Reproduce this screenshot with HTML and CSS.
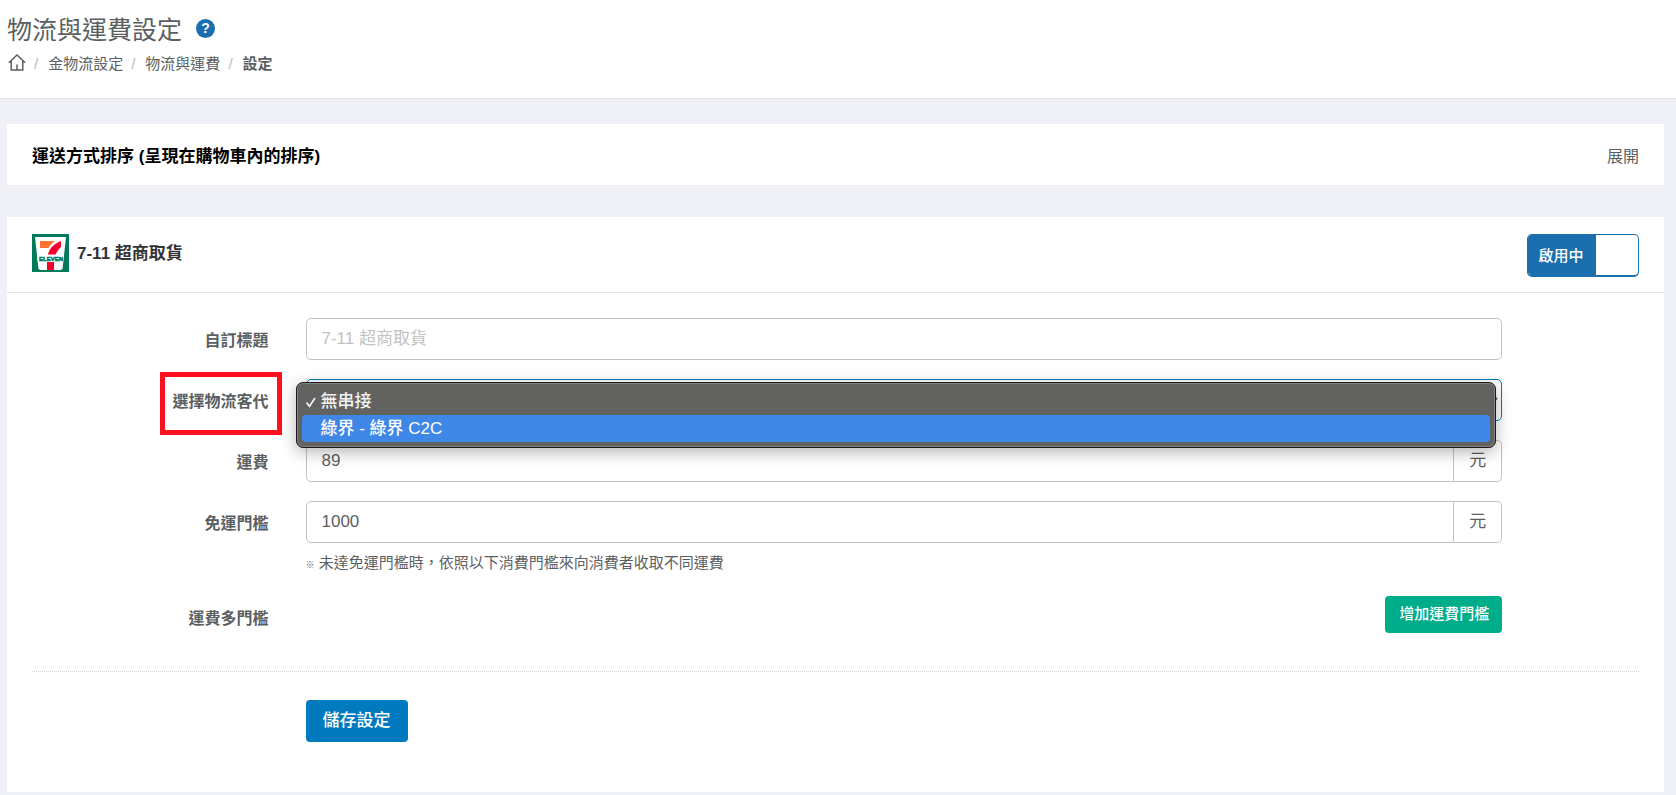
FILE: index.html
```html
<!DOCTYPE html>
<html lang="zh-Hant">
<head>
<meta charset="utf-8">
<title>物流與運費設定</title>
<link rel="stylesheet" href="styles.css">
</head>
<body>
<header class="page-header">
  <div class="title-row">
    <h1 class="page-title">物流與運費設定</h1>
    <a class="help" href="#" aria-label="說明">?</a>
  </div>
  <nav class="breadcrumb">
    <a class="crumb" href="#" aria-label="首頁">
      <svg class="home" viewBox="0 0 18 17" aria-hidden="true"><path d="M.8 8.700 9 1l8.200 7.700M3.200 7v8.900h11.600V7M9 10.500V16"/></svg>
    </a>
    <a class="crumb" href="#">金物流設定</a>
    <a class="crumb" href="#">物流與運費</a>
    <strong class="crumb">設定</strong>
  </nav>
</header>
<main class="content">
  <section class="card sort-card">
    <h2 class="sort-title">運送方式排序 (呈現在購物車內的排序)</h2>
    <a class="expand" href="#">展開</a>
  </section>
  <section class="card">
    <div class="card-header">
      <svg class="logo" viewBox="0 0 37 38" aria-hidden="true">
        <path fill="#007a5a" d="M0 0h37v38H0z"/>
        <path fill="#fff" d="M3 3h31l-3.500 32-2 1h-20l-2-1z"/>
        <path fill="#ff7330" d="M8 7h15c-3 2-5 4-6.500 7H8z"/>
        <path fill="#f4002e" d="M29 7v6c-4 4-6.500 8-7 14v9h-7v-8c0-10 4-17 14-21z"/>
        <path fill="#fff" d="M5 20.500h27L31.200 28H5.800z"/>
        <text class="logo-text" x="7" y="26.500">ELEVEN</text>
      </svg>
      <h2 class="card-title">7-11 超商取貨</h2>
      <label class="switch">
        <input class="switch-input" type="checkbox" checked>
        <span class="switch-on">啟用中</span>
        <span class="switch-handle"></span>
      </label>
    </div>
    <form class="form">
      <div class="row">
        <label class="label" for="custom-title">自訂標題</label>
        <div class="field"><input class="control" id="custom-title" type="text" placeholder="7-11 超商取貨"></div>
      </div>
      <div class="row">
        <label class="label" for="provider"><span class="highlight">選擇物流客代</span></label>
        <div class="field">
          <select class="control control-active" id="provider">
            <option>無串接</option>
            <option>綠界 - 綠界 C2C</option>
          </select>
          <ul class="menu" role="listbox" aria-label="選擇物流客代">
            <li class="menu-item" role="option" aria-selected="true">
              <svg class="check" viewBox="0 0 12 12" aria-hidden="true"><path d="m1.500 6.500 3 3.800L10 2"/></svg>無串接
            </li>
            <li class="menu-item menu-item-active" role="option" aria-selected="false">綠界 - 綠界 C2C</li>
          </ul>
        </div>
      </div>
      <div class="row">
        <label class="label" for="fee">運費</label>
        <div class="field group"><input class="control" id="fee" type="text" value="89"><span class="unit">元</span></div>
      </div>
      <div class="row">
        <label class="label" for="free-threshold">免運門檻</label>
        <div class="field">
          <div class="group"><input class="control" id="free-threshold" type="text" value="1000"><span class="unit">元</span></div>
          <p class="note"><span class="mark">※</span> 未達免運門檻時，依照以下消費門檻來向消費者收取不同運費</p>
        </div>
      </div>
      <div class="row">
        <span class="label">運費多門檻</span>
        <div class="field field-end"><button class="button button-add" type="button">增加運費門檻</button></div>
      </div>
      <hr class="divider">
      <div class="row">
        <span class="label"></span>
        <div class="field"><button class="button button-save" type="submit">儲存設定</button></div>
      </div>
    </form>
  </section>
</main>
</body>
</html>
```
FILE: styles.css
```css
* {
  box-sizing: border-box;
}

body {
  margin: 0;
  background: #f0f1f7;
  color: #5b5f62;
  font: 16px/24px "Liberation Sans", "Noto Sans CJK TC", sans-serif;
}

a {
  color: inherit;
  text-decoration: none;
}

h1,
h2,
p,
ul {
  margin: 0;
  padding: 0;
}

.page-header {
  padding: 12px 7px 22px;
  background: #fff;
  border-bottom: 1px solid #e1e4e9;
}

.title-row {
  display: flex;
  align-items: flex-start;
  gap: 14px;
}

.page-title {
  font-size: 25px;
  font-weight: 400;
  line-height: 36px;
}

.help {
  width: 19px;
  height: 19px;
  margin-top: 7px;
  border-radius: 50%;
  background: #1c6fae;
  color: #fff;
  font-size: 14px;
  font-weight: 700;
  line-height: 19px;
  text-align: center;
}

.breadcrumb {
  display: flex;
  align-items: center;
  margin-top: 4px;
  font-size: 15px;
}

.crumb + .crumb::before {
  content: "/";
  padding: 0 10px 0 8px;
  color: #bbb;
  font-weight: 400;
}

.home {
  display: block;
  width: 18px;
  height: 17px;
  margin: 0 0 3px 1px;
  fill: none;
  stroke: #5b5f62;
  stroke-width: 1.5;
}

.content {
  display: flex;
  flex-direction: column;
  gap: 32px;
  padding: 25px 12px 4px 7px;
}

.card {
  background: #fff;
}

.sort-card {
  display: flex;
  align-items: center;
  justify-content: space-between;
  padding: 21px 25px 16px;
}

.sort-title {
  color: #000;
  font-size: 17px;
  line-height: 24px;
}

.card-header {
  display: flex;
  align-items: flex-start;
  padding: 17px 25px 15px;
  border-bottom: 1px solid #e1e3e5;
}

.logo {
  width: 37px;
  height: 38px;
}

.logo-text {
  fill: #007a5a;
  stroke: #007a5a;
  stroke-width: 0.5;
  font: 700 6px "Liberation Sans", sans-serif;
}

.card-title {
  margin-left: 8px;
  color: #333;
  font-size: 17px;
  line-height: 39px;
}

.switch {
  display: flex;
  position: relative;
  width: 112px;
  height: 43px;
  margin-left: auto;
  overflow: hidden;
  border: 1px solid #1c6fae;
  border-bottom-width: 2px;
  border-radius: 5px;
}

.switch-input {
  position: absolute;
  opacity: 0;
}

.switch-on {
  width: 68px;
  padding-right: 2px;
  background: #1c6fae;
  color: #fff;
  font-size: 15px;
  font-weight: 500;
  line-height: 41px;
  text-align: center;
}

.form {
  padding: 25px 25px 31px;
}

.row {
  display: flex;
  margin: 0 -17px 19px;
}

.label {
  width: 16.6667%;
  padding: 11px 20px 0 0;
  font-weight: 700;
  line-height: 24px;
  text-align: right;
}

.highlight {
  position: relative;
}

.highlight::after {
  content: "";
  position: absolute;
  inset: -21px -13px -25px -12px;
  border: 5px solid #ff1020;
}

.field {
  position: relative;
  width: 75%;
  padding: 0 17px;
}

.field-end {
  min-height: 46px;
  text-align: right;
}

.control {
  display: block;
  width: 100%;
  height: 42px;
  padding: 0 15px;
  border: 1px solid #c2c2c2;
  border-radius: 5px;
  background: #fff;
  color: #5b5f62;
  font: inherit;
  font-size: 17px;
}

.control::placeholder {
  color: #c2c2c2;
}

.control-active {
  border-color: #0079bf;
}

.group {
  display: flex;
}

.group .control {
  flex: 1;
  border-radius: 5px 0 0 5px;
}

.unit {
  width: 48px;
  border: 1px solid #c2c2c2;
  border-left: 0;
  border-radius: 0 5px 5px 0;
  font-size: 17px;
  line-height: 40px;
  text-align: center;
}

.menu {
  position: absolute;
  z-index: 1;
  top: 3px;
  right: 23px;
  left: 7px;
  padding: 5px;
  border: 1px solid #1c1c1c;
  border-radius: 7px;
  background: #626260;
  box-shadow: inset 0 0 0 1px #80807f, 0 4px 16px rgba(0, 0, 0, 0.3);
  color: #f3f3f3;
  font-size: 17px;
  font-weight: 500;
  line-height: 27px;
  list-style: none;
}

.menu-item {
  position: relative;
  padding-left: 19px;
  border-radius: 4px;
}

.menu-item-active {
  background: #3f87e6;
  color: #fff;
}

.check {
  position: absolute;
  top: 8px;
  left: 3px;
  width: 12px;
  height: 12px;
  fill: none;
  stroke: #f3f3f3;
  stroke-width: 1.7;
}

.note {
  margin-top: 8px;
  font-size: 15px;
}

.mark {
  font-size: 9px;
  font-weight: 700;
}

.button {
  border: 0;
  border-radius: 4px;
  color: #fff;
  font: inherit;
  font-weight: 500;
}

.button-add {
  height: 37px;
  padding: 0 13px 2px 14px;
  background: #00ad8a;
  font-size: 15px;
}

.button-save {
  height: 42px;
  padding: 0 17px;
  background: #007abf;
  font-size: 17px;
}

.divider {
  margin: 29px 0 28px;
  border: 0;
  border-top: 1px dotted #d2d2d2;
}
```
